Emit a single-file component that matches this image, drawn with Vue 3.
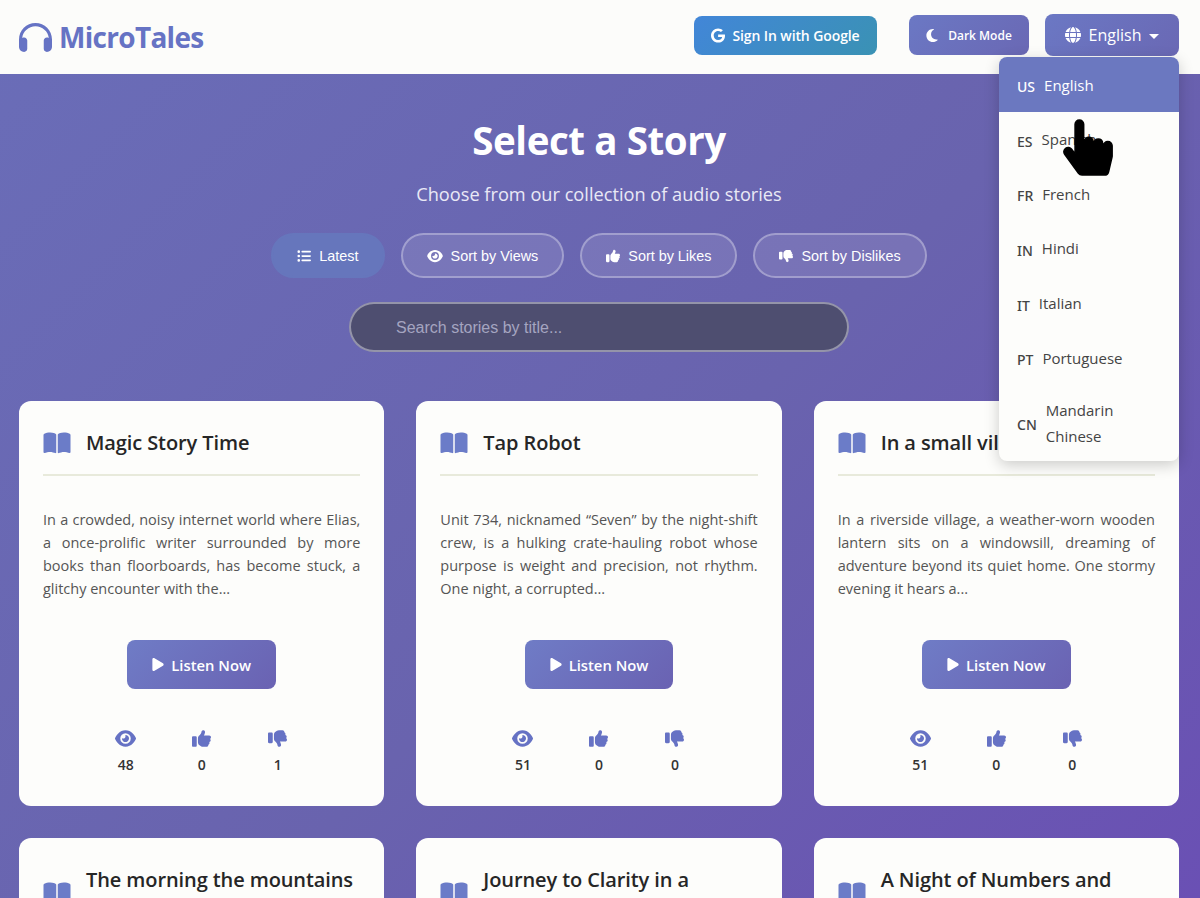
<script setup>
const paths = {
  headphones: 'M256 80C149.9 80 62.4 159.4 49.6 262c9.4-3.8 19.6-6 30.4-6c26.5 0 48 21.5 48 48V432c0 26.5-21.5 48-48 48c-44.2 0-80-35.8-80-80V384 336 288C0 146.6 114.6 32 256 32s256 114.6 256 256v48 48 16c0 44.2-35.8 80-80 80c-26.5 0-48-21.5-48-48V304c0-26.5 21.5-48 48-48c10.8 0 21 2.1 30.4 6C449.6 159.4 362.1 80 256 80z',
  google: 'M488 261.8C488 403.3 391.1 504 248 504 110.8 504 0 393.2 0 256S110.8 8 248 8c66.8 0 123 24.5 166.3 64.9l-67.5 64.9C258.5 52.6 94.3 116.6 94.3 256c0 86.5 69.1 156.6 153.7 156.6 98.2 0 135-70.4 140.8-106.9H248v-85.3h236.1c2.3 12.7 3.9 24.9 3.9 41.4z',
  moon: 'M223.5 32C100 32 0 132.3 0 256S100 480 223.5 480c60.6 0 115.5-24.2 155.8-63.4c5-4.9 6.3-12.5 3.1-18.7s-10.1-9.7-17-8.5c-9.8 1.7-19.8 2.6-30.1 2.6c-96.9 0-175.5-78.8-175.5-176c0-65.8 36-123.1 89.3-153.3c6.1-3.5 9.2-10.5 7.7-17.3s-7.3-11.9-14.3-12.5c-6.3-.5-12.6-.8-19-.8z',
  globe: 'M352 256c0 22.2-1.2 43.6-3.3 64H163.3c-2.2-20.4-3.3-41.8-3.3-64s1.2-43.6 3.3-64H348.7c2.2 20.4 3.3 41.8 3.3 64zm28.8-64H503.9c5.3 20.5 8.1 41.9 8.1 64s-2.8 43.5-8.1 64H380.8c2.1-20.6 3.2-42 3.2-64s-1.1-43.4-3.2-64zm112.6-32H376.7c-10-63.9-29.8-117.4-55.3-151.6c78.3 20.7 142 77.5 171.9 151.6zm-149.1 0H167.7c6.1-36.4 15.5-68.6 27-94.7c10.5-23.6 22.2-40.7 33.5-51.5C239.4 3.2 248.7 0 256 0s16.6 3.2 27.8 13.8c11.3 10.8 23 27.9 33.5 51.5c11.6 26 20.9 58.2 27 94.7zm-209 0H18.6C48.6 85.9 112.2 29.1 190.6 8.4C165.1 42.6 145.3 96.1 135.3 160zM8.1 192H131.2c-2.1 20.6-3.2 42-3.2 64s1.1 43.4 3.2 64H8.1C2.8 299.5 0 278.1 0 256s2.8-43.5 8.1-64zM194.7 446.6c-11.6-26-20.9-58.2-27-94.6H344.3c-6.1 36.4-15.5 68.6-27 94.6c-10.5 23.6-22.2 40.7-33.5 51.5C272.6 508.8 263.3 512 256 512s-16.6-3.2-27.8-13.8c-11.3-10.8-23-27.9-33.5-51.5zM135.3 352c10 63.9 29.8 117.4 55.3 151.6C112.2 482.9 48.6 426.1 18.6 352H135.3zm358.1 0c-30 74.1-93.6 130.9-171.9 151.6c25.5-34.2 45.2-87.7 55.3-151.6H493.4z',
  list: 'M64 144a48 48 0 1 0 0-96 48 48 0 1 0 0 96zM192 64c-17.7 0-32 14.3-32 32s14.3 32 32 32H480c17.7 0 32-14.3 32-32s-14.3-32-32-32H192zm0 160c-17.7 0-32 14.3-32 32s14.3 32 32 32H480c17.7 0 32-14.3 32-32s-14.3-32-32-32H192zm0 160c-17.7 0-32 14.3-32 32s14.3 32 32 32H480c17.7 0 32-14.3 32-32s-14.3-32-32-32H192zM64 304a48 48 0 1 0 0-96 48 48 0 1 0 0 96zm48 112a48 48 0 1 0 -96 0 48 48 0 1 0 96 0z',
  eye: 'M288 32c-80.8 0-145.5 36.8-192.6 80.6C48.6 156 17.3 208 2.5 243.7c-3.3 7.9-3.3 16.7 0 24.6C17.3 304 48.6 356 95.4 399.4C142.5 443.2 207.2 480 288 480s145.5-36.8 192.6-80.6c46.8-43.5 78.1-95.4 93-131.1c3.3-7.9 3.3-16.7 0-24.6c-14.9-35.7-46.2-87.7-93-131.1C433.5 68.8 368.8 32 288 32zM144 256a144 144 0 1 1 288 0 144 144 0 1 1 -288 0zm144-64c0 35.3-28.7 64-64 64c-7.1 0-13.9-1.2-20.3-3.3c-5.5-1.8-11.9 1.6-11.7 7.4c.3 6.9 1.3 13.8 3.2 20.7c13.7 51.2 66.4 81.6 117.6 67.9s81.6-66.4 67.9-117.6c-11.1-41.5-47.8-69.4-88.6-71.1c-5.8-.2-9.2 6.1-7.4 11.7c2.1 6.4 3.3 13.2 3.3 20.3z',
  up: 'M313.4 32.9c26 5.2 42.9 30.5 37.7 56.5l-2.3 11.4c-5.3 26.7-15.1 52.1-28.8 75.2H464c26.5 0 48 21.5 48 48c0 18.5-10.5 34.6-25.9 42.6C497 275.4 504 288.9 504 304c0 23.4-16.8 42.9-38.9 47.1c4.4 7.3 6.9 15.8 6.9 24.9c0 21.3-13.9 39.4-33.1 45.6c.7 3.3 1.1 6.8 1.1 10.4c0 26.5-21.5 48-48 48H294.5c-19 0-37.5-5.6-53.3-16.1l-38.5-25.7C176 420.4 160 390.4 160 358.3V320 272 247.1c0-29.2 13.3-56.7 36-75l7.4-5.9c26.5-21.2 44.6-51 51.2-84.2l2.3-11.4c5.2-26 30.5-42.9 56.5-37.7zM32 192H96c17.7 0 32 14.3 32 32V448c0 17.7-14.3 32-32 32H32c-17.7 0-32-14.3-32-32V224c0-17.7 14.3-32 32-32z',
  down: 'M313.4 479.1c26-5.2 42.9-30.5 37.7-56.5l-2.3-11.4c-5.3-26.7-15.1-52.1-28.8-75.2H464c26.5 0 48-21.5 48-48c0-18.5-10.5-34.6-25.9-42.6C497 236.6 504 223.1 504 208c0-23.4-16.8-42.9-38.9-47.1c4.4-7.3 6.9-15.8 6.9-24.9c0-21.3-13.9-39.4-33.1-45.6c.7-3.3 1.1-6.8 1.1-10.4c0-26.5-21.5-48-48-48H294.5c-19 0-37.5 5.6-53.3 16.1L202.7 73.8C176 91.6 160 121.6 160 153.7V192v48 24.9c0 29.2 13.3 56.7 36 75l7.4 5.9c26.5 21.2 44.6 51 51.2 84.2l2.3 11.4c5.2 26 30.5 42.9 56.5 37.7zM32 384H96c17.7 0 32-14.3 32-32V128c0-17.7-14.3-32-32-32H32C14.3 96 0 110.3 0 128V352c0 17.7 14.3 32 32 32z',
  play: 'M73 39c-14.8-9.1-33.4-9.4-48.5-.9S0 62.6 0 80V432c0 17.4 9.4 33.4 24.5 41.9s33.7 8.1 48.5-.9L361 297c14.3-8.7 23-24.2 23-41s-8.7-32.2-23-41L73 39z',
  book: 'M249.6 471.5c10.8 3.8 22.4-4.1 22.4-15.5V78.6c0-4.2-1.6-8.4-5-11C247.4 52 202.4 32 144 32C93.5 32 46.3 45.3 18.1 56.1C6.8 60.5 0 71.7 0 83.8V454.1c0 11.9 12.8 20.2 24.1 16.5C55.6 460.1 105.5 448 144 448c33.9 0 79 14 105.6 23.5zm76.8 0C353 462 398.1 448 432 448c38.5 0 88.4 12.1 119.9 22.6c11.3 3.8 24.1-4.6 24.1-16.5V83.8c0-12.1-6.8-23.3-18.1-27.6C529.7 45.3 482.5 32 432 32c-58.4 0-103.4 20-123 35.6c-3.3 2.6-5 6.8-5 11V456c0 11.4 11.7 19.3 22.4 15.5z',
  hand: 'M448 240v96c0 3.084-.356 6.159-1.063 9.162l-32 136C410.686 499.23 394.562 512 376 512H168a40.004 40.004 0 0 1-32.35-16.473l-127.997-176c-12.993-17.866-9.043-42.883 8.822-55.876 17.867-12.994 42.884-9.043 55.877 8.823L104 315.992V40c0-22.091 17.908-40 40-40s40 17.909 40 40v200h8v-40c0-22.091 17.908-40 40-40s40 17.909 40 40v40h8v-24c0-22.091 17.908-40 40-40s40 17.909 40 40v24h8c0-22.091 17.908-40 40-40s40 17.909 40 40z'
}

const sorts = [
  { label: 'Latest', icon: 'list', box: '0 0 512 512', active: true },
  { label: 'Sort by Views', icon: 'eye', box: '0 0 576 512', wide: true },
  { label: 'Sort by Likes', icon: 'up', box: '0 0 512 512' },
  { label: 'Sort by Dislikes', icon: 'down', box: '0 0 512 512' }
]

const languages = [
  { code: 'US', name: 'English', active: true },
  { code: 'ES', name: 'Spanish' },
  { code: 'FR', name: 'French' },
  { code: 'IN', name: 'Hindi' },
  { code: 'IT', name: 'Italian' },
  { code: 'PT', name: 'Portuguese' },
  { code: 'CN', name: 'Mandarin Chinese', wrap: true }
]

const stories = [
  { title: 'Magic Story Time', text: 'In a crowded, noisy internet world where Elias, a once-prolific writer surrounded by more books than floorboards, has become stuck, a glitchy encounter with the...', views: 48, likes: 0, dislikes: 1 },
  { title: 'Tap Robot', text: 'Unit 734, nicknamed “Seven” by the night-shift crew, is a hulking crate-hauling robot whose purpose is weight and precision, not rhythm. One night, a corrupted...', views: 51, likes: 0, dislikes: 0 },
  { title: 'In a small village', text: 'In a riverside village, a weather-worn wooden lantern sits on a windowsill, dreaming of adventure beyond its quiet home. One stormy evening it hears a...', views: 51, likes: 0, dislikes: 0 },
  { title: 'The morning the mountains moved', text: 'The morning the mountains moved, nobody in the valley could say why.', views: 40, likes: 0, dislikes: 0 },
  { title: 'Journey to Clarity in a Distracted World', text: 'A quiet traveller looks for a clear answer in a noisy world.', views: 38, likes: 0, dislikes: 0 },
  { title: 'A Night of Numbers and Stars', text: 'One night of counting turns into a long walk under the stars.', views: 36, likes: 0, dislikes: 0 }
]
</script>

<template>
  <div class="page">
    <header class="navbar">
      <div class="brand">
        <svg class="brand-icon" viewBox="0 0 512 512"><path :d="paths.headphones" /></svg>
        <span>MicroTales</span>
      </div>
      <div class="nav-actions">
        <button class="nav-btn google">
          <svg class="ic-g" viewBox="0 0 488 512"><path :d="paths.google" /></svg>
          Sign In with Google
        </button>
        <button class="nav-btn dark">
          <svg class="ic-moon" viewBox="0 0 384 512"><path :d="paths.moon" /></svg>
          Dark Mode
        </button>
        <div class="lang">
          <button class="nav-btn lang-btn">
            <svg class="ic-globe" viewBox="0 0 512 512"><path :d="paths.globe" /></svg>
            English
            <span class="caret"></span>
          </button>
          <ul class="lang-menu">
            <li v-for="l in languages" :key="l.code" :class="{ active: l.active, wrap: l.wrap }">
              <span class="code">{{ l.code }}</span>
              <span class="lname">{{ l.name }}</span>
            </li>
          </ul>
        </div>
      </div>
    </header>

    <main class="content">
      <section class="hero">
        <h1>Select a Story</h1>
        <p>Choose from our collection of audio stories</p>
        <div class="sorts">
          <button v-for="s in sorts" :key="s.label" class="sort" :class="{ active: s.active }">
            <svg class="sort-ic" :class="{ wide: s.wide }" :viewBox="s.box"><path :d="paths[s.icon]" /></svg>
            {{ s.label }}
          </button>
        </div>
        <input class="search" type="text" placeholder="Search stories by title..." />
      </section>

      <section class="grid">
        <article v-for="s in stories" :key="s.title" class="card">
          <div class="card-head">
            <svg class="book" viewBox="0 0 576 512"><path :d="paths.book" /></svg>
            <h3>{{ s.title }}</h3>
          </div>
          <p class="desc">{{ s.text }}</p>
          <button class="listen">
            <svg class="play" viewBox="0 0 384 512"><path :d="paths.play" /></svg>
            Listen Now
          </button>
          <div class="stats">
            <div class="stat">
              <svg class="st-eye" viewBox="0 0 576 512"><path :d="paths.eye" /></svg>
              <span>{{ s.views }}</span>
            </div>
            <div class="stat">
              <svg class="st-th" viewBox="0 0 512 512"><path :d="paths.up" /></svg>
              <span>{{ s.likes }}</span>
            </div>
            <div class="stat">
              <svg class="st-th" viewBox="0 0 512 512"><path :d="paths.down" /></svg>
              <span>{{ s.dislikes }}</span>
            </div>
          </div>
        </article>
      </section>
    </main>

    <svg class="cursor" viewBox="-8 -8 464 528"><path :d="paths.hand" /></svg>
  </div>
</template>

<style>
html, body { margin: 0; height: 100%; overflow: hidden; }
</style>

<style scoped>
.page {
  position: relative;
  height: 898px;
  overflow: hidden;
  font-family: "Open Sans", "Noto Sans", sans-serif;
  background: linear-gradient(135deg, #6a6db8 0%, #6963ae 55%, #6a50b4 100%);
}
svg { fill: currentColor; display: block; flex: none; }
button { font-family: inherit; border: none; cursor: pointer; }

.navbar {
  height: 74px;
  box-sizing: border-box;
  background: #fcfcfa;
  display: flex;
  align-items: center;
  justify-content: space-between;
  padding: 0 21px 4px 19px;
}
.brand { display: flex; align-items: center; gap: 7px; margin-top: 4px; color: #6673c4; font-size: 28px; font-weight: 700; letter-spacing: -0.7px; }
.brand-icon { width: 33px; height: 33px; }

.nav-actions { display: flex; align-items: center; }
.nav-btn {
  display: flex;
  align-items: center;
  color: #fff;
  border-radius: 8px;
  background: linear-gradient(135deg, #6b78c4, #6a68b4);
}
.google {
  width: 183px;
  height: 39px;
  margin-right: 32px;
  margin-top: 1px;
  justify-content: center;
  gap: 7px;
  font-size: 14px;
  font-weight: 600;
  letter-spacing: -0.1px;
  background: linear-gradient(135deg, #4286d8, #3a92b4);
}
.ic-g { width: 14px; height: 15px; }
.dark {
  width: 120px;
  height: 40px;
  margin-right: 16px;
  justify-content: center;
  gap: 10px;
  font-size: 12px;
  font-weight: 600;
}
.ic-moon { width: 12px; height: 15px; }
.lang { position: relative; }
.lang-btn {
  width: 134px;
  height: 42px;
  justify-content: center;
  gap: 8px;
  font-size: 16px;
}
.ic-globe { width: 16px; height: 16px; }
.caret { width: 0; height: 0; border-left: 5px solid transparent; border-right: 5px solid transparent; border-top: 5px solid #fff; margin-top: 2px; }

.lang-menu {
  position: absolute;
  z-index: 5;
  top: 43px;
  right: 0;
  width: 180px;
  margin: 0;
  padding: 0;
  list-style: none;
  background: #fdfdfb;
  border-radius: 8px;
  box-shadow: 0 4px 15px rgba(0, 0, 0, 0.2);
  overflow: hidden;
  color: #444;
}
.lang-menu li {
  display: flex;
  align-items: center;
  gap: 9px;
  height: 54.6px;
  box-sizing: border-box;
  padding: 0 18px;
  font-size: 15px;
}
.lang-menu li.active { background: #6b78c0; color: #fff; height: 55px; }
.lang-menu li.wrap { height: 76px; gap: 9px; }
.lang-menu li.wrap .lname { width: 72px; line-height: 26px; }
.code { font-family: "Noto Sans", "Open Sans", sans-serif; font-size: 14px; font-weight: 500; position: relative; top: 2px; }
.lname { position: relative; top: 0; }

.content { padding: 0 21px 0 19px; }
.hero { display: flex; flex-direction: column; align-items: center; padding-top: 41px; }
.hero h1 { margin: 0; font-size: 38.5px; line-height: 50px; font-weight: 700; color: #fff; letter-spacing: -0.4px; }
.hero p { margin: 17px 0 0; font-size: 18.2px; line-height: 24px; color: #e9e9f6; }
.sorts { display: flex; gap: 16px; margin-top: 27px; }
.sort {
  display: flex;
  align-items: center;
  gap: 8px;
  height: 45px;
  box-sizing: border-box;
  padding: 0 24px;
  border: 2px solid rgba(255, 255, 255, 0.3);
  border-radius: 23px;
  background: rgba(255, 255, 255, 0.1);
  color: #fff;
  font-family: "Liberation Sans", Arial, sans-serif;
  font-size: 14.4px;
}
.sort.active { background: #6676bc; border-color: #6676bc; }
.sort-ic { width: 14px; height: 14px; }
.sort-ic.wide { width: 16px; }
.search {
  display: block;
  width: 500px;
  height: 50px;
  box-sizing: border-box;
  margin-top: 24px;
  padding: 2px 45px 0;
  border: 2px solid rgba(255, 255, 255, 0.4);
  border-radius: 25px;
  background: #4e4e70;
  color: #fff;
  font-family: "Liberation Sans", Arial, sans-serif;
  font-size: 16px;
  outline: none;
}
.search::placeholder { color: #a5a5c0; opacity: 1; }

.grid {
  display: grid;
  grid-template-columns: repeat(3, 1fr);
  gap: 32px;
  margin-top: 49px;
}
.card {
  height: 405px;
  box-sizing: border-box;
  padding: 24px;
  background: #fdfdfb;
  border-radius: 12px;
  display: flex;
  flex-direction: column;
  align-items: stretch;
}
.card-head {
  display: flex;
  align-items: center;
  gap: 15px;
  padding: 5px 0 18px;
  border-bottom: 2px solid #e8eadb;
}
.book { width: 28px; height: 24px; color: #6b7cc8; }
.card-head h3 { margin: 0; font-size: 20px; line-height: 26px; font-weight: 600; letter-spacing: -0.1px; color: #262626; }
.desc {
  margin: 32px 0 0;
  height: 92px;
  font-size: 14.5px;
  line-height: 23px;
  color: #555;
  text-align: justify;
}
.listen {
  align-self: center;
  display: flex;
  align-items: center;
  gap: 7px;
  margin-top: 40px;
  height: 49px;
  padding: 0 25px;
  border-radius: 8px;
  background: linear-gradient(135deg, #6f7cc6, #6a62b2);
  color: #fff;
  font-size: 14.8px;
  font-weight: 600;
}
.play { width: 12px; height: 15px; }
.stats {
  display: flex;
  justify-content: center;
  margin-top: 40px;
}
.stat {
  width: 76px;
  display: flex;
  flex-direction: column;
  align-items: center;
  gap: 7px;
  color: #6672c4;
}
.stat span { font-size: 14px; line-height: 19px; font-weight: 600; color: #333; }
.st-eye { width: 21px; height: 19px; }
.st-th { width: 19px; height: 19px; }

.cursor { position: absolute; z-index: 10; left: 1063px; top: 117px; width: 50px; height: 61px; color: #000; }
.cursor path { stroke: #000; stroke-width: 14; stroke-linejoin: round; }
</style>
